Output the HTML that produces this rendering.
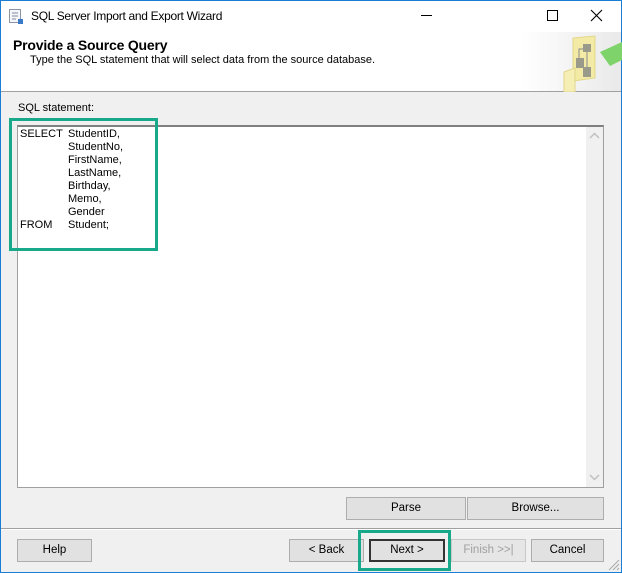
<!DOCTYPE html>
<html><head><style>
*{box-sizing:border-box;margin:0;padding:0}
body{width:622px;height:573px;position:relative;background:#f0f0f0;font-family:"Liberation Sans",sans-serif;font-size:11px;color:#000;overflow:hidden}
.abs{position:absolute}
.btn{position:absolute;background:#e1e1e1;border:1px solid #adadad;text-align:center;font-size:11.5px;line-height:21px}
</style></head><body>
<div class="abs" style="left:0;top:0;width:622px;height:573px;border:1px solid #1a7fd4"></div>
<div class="abs" style="left:1px;top:1px;width:620px;height:31px;background:#fff"></div>
<svg class="abs" style="left:8px;top:8px" width="16" height="17"><rect x="1.5" y="1.5" width="11" height="13" fill="#f4f6f9" stroke="#8a96a8"/><path d="M4 5h6M4 8h6M4 11h4" stroke="#7f8da3"/><rect x="10" y="11" width="5" height="5" fill="#3a78c8"/></svg>
<div class="abs" style="left:31px;top:9px;font-size:12px;letter-spacing:-0.3px">SQL Server Import and Export Wizard</div>
<div class="abs" style="left:421px;top:15px;width:11px;height:1px;background:#000"></div>
<div class="abs" style="left:547px;top:10px;width:11px;height:11px;border:1px solid #000"></div>
<svg class="abs" style="left:590px;top:9px" width="13" height="13"><path d="M1 1L12 12M12 1L1 12" stroke="#000" stroke-width="1.1"/></svg>
<div class="abs" style="left:1px;top:32px;width:620px;height:59px;background:linear-gradient(90deg,#fff 0,#fff 520px,#e9e9e9 620px)"></div>
<div class="abs" style="left:1px;top:91px;width:620px;height:1px;background:#a0a0a0"></div>
<div class="abs" style="left:13px;top:37px;font-size:14px;font-weight:bold;letter-spacing:-0.2px">Provide a Source Query</div>
<div class="abs" style="left:30px;top:54px;font-size:11px">Type the SQL statement that will select data from the source database.</div>
<svg class="abs" style="left:562px;top:34px" width="60" height="58">
<path d="M11 4L33 2L33 44L11 47Z" fill="#f3eaa5" stroke="#e2d78a"/>
<path d="M2 38L13 34L13 58L2 58Z" fill="#f5eeb5" stroke="#e2d78a"/>
<rect x="21" y="10" width="8" height="8" fill="#9a9a8a"/><rect x="14" y="24" width="8" height="10" fill="#9a9a8a"/><rect x="21" y="33" width="8" height="10" fill="#9a9a8a"/>
<path d="M17 24V15h4M25 18v15" stroke="#888" fill="none"/>
<path d="M38 18L60 8L60 26L48 32Z" fill="#7ed36a"/>
</svg>
<div class="abs" style="left:18px;top:102px;font-size:11px">SQL statement:</div>
<div class="abs" style="left:17px;top:125px;width:587px;height:363px;background:#fff;border:1px solid #a0a0a0;border-top:2px solid #808080"></div>
<div class="abs" style="left:586px;top:127px;width:17px;height:360px;background:#f0f0f0"></div>
<svg class="abs" style="left:589px;top:132px" width="11" height="8"><path d="M1 6L5.5 1.5L10 6" stroke="#c0c0c0" stroke-width="1.5" fill="none"/></svg>
<svg class="abs" style="left:589px;top:473px" width="11" height="8"><path d="M1 2L5.5 6.5L10 2" stroke="#c0c0c0" stroke-width="1.5" fill="none"/></svg>
<div class="abs" style="left:20px;top:128px;line-height:13px;font-size:11px">SELECT<br><br><br><br><br><br><br>FROM</div>
<div class="abs" style="left:68px;top:128px;line-height:13px;font-size:11px">StudentID,<br>StudentNo,<br>FirstName,<br>LastName,<br>Birthday,<br>Memo,<br>Gender<br>Student;</div>
<div class="abs" style="left:9px;top:118px;width:149px;height:133px;border:3px solid #17a98a"></div>
<div class="btn" style="left:346px;top:497px;width:120px;height:23px">Parse</div>
<div class="btn" style="left:467px;top:497px;width:137px;height:23px">Browse...</div>
<div class="abs" style="left:1px;top:528px;width:620px;height:1px;background:#a0a0a0"></div>
<div class="abs" style="left:1px;top:529px;width:620px;height:1px;background:#fff"></div>
<div class="btn" style="left:17px;top:539px;width:75px;height:23px">Help</div>
<div class="btn" style="left:289px;top:539px;width:75px;height:23px">&lt; Back</div>
<div class="btn" style="left:369px;top:539px;width:76px;height:23px;border:2px solid #333;line-height:19px">Next &gt;</div>
<div class="btn" style="left:451px;top:539px;width:75px;height:23px;color:#a0a0a0;background:#e6e6e6;border-color:#c8c8c8">Finish &gt;&gt;|</div>
<div class="btn" style="left:531px;top:539px;width:73px;height:23px">Cancel</div>
<div class="abs" style="left:358px;top:530px;width:93px;height:41px;border:3px solid #17a98a"></div>
<svg class="abs" style="left:608px;top:558px" width="12" height="13"><path d="M11 2L1 12M11 6L5 12M11 10L9 12" stroke="#aaa"/></svg>
</body></html>
